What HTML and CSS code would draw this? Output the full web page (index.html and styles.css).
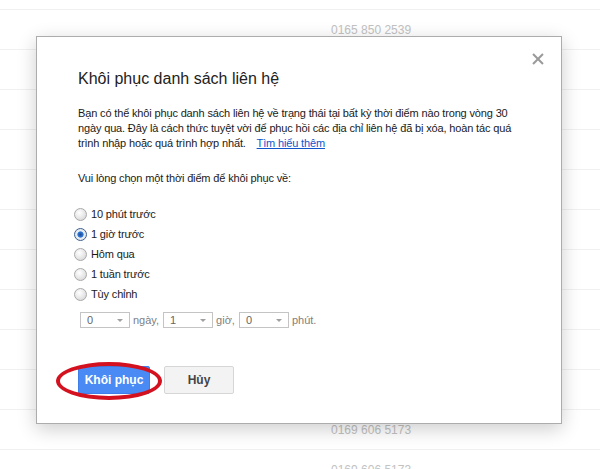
FILE: index.html
```html
<!DOCTYPE html>
<html lang="vi">
<head>
    <meta charset="UTF-8">
    <title>Khôi phục danh sách liên hệ</title>
    <link rel="stylesheet" href="styles.css">
</head>
<body>
    <div class="contacts">
        <div class="row"></div>
        <div class="row"><span class="phone">0165 850 2539</span></div>
        <div class="row"></div>
        <div class="row"></div>
        <div class="row"></div>
        <div class="row"></div>
        <div class="row"></div>
        <div class="row"></div>
        <div class="row"></div>
        <div class="row"></div>
        <div class="row"></div>
        <div class="row"><span class="phone">0169 606 5173</span></div>
        <div class="row"><span class="phone">0169 606 5173</span></div>
    </div>

    <div class="dialog">
        <span class="close" title="Đóng"></span>
        <h1 class="title">Khôi phục danh sách liên hệ</h1>
        <p class="intro">Bạn có thể khôi phục danh sách liên hệ về trạng thái tại bất kỳ thời điểm nào trong vòng 30<br>
            ngày qua. Đây là cách thức tuyệt vời để phục hồi các địa chỉ liên hệ đã bị xóa, hoàn tác quá<br>
            trình nhập hoặc quá trình hợp nhất. <a href="#" class="learn">Tìm hiểu thêm</a></p>
        <p class="prompt">Vui lòng chọn một thời điểm để khôi phục về:</p>

        <div class="options">
            <label class="option"><input type="radio" name="when"> 10 phút trước</label>
            <label class="option"><input type="radio" name="when" checked> 1 giờ trước</label>
            <label class="option"><input type="radio" name="when"> Hôm qua</label>
            <label class="option"><input type="radio" name="when"> 1 tuần trước</label>
            <label class="option"><input type="radio" name="when"> Tùy chỉnh</label>
        </div>

        <div class="custom">
            <span class="select">0</span><span class="unit">ngày,</span>
            <span class="select">1</span><span class="unit">giờ,</span>
            <span class="select">0</span><span class="unit">phút.</span>
        </div>

        <div class="actions">
            <button class="btn btn-primary">Khôi phục</button>
            <button class="btn">Hủy</button>
            <span class="mark"></span>
        </div>
    </div>
</body>
</html>
```

FILE: styles.css
```css
body {
    margin: 0;
    font-family: 'Liberation Sans', Arial, sans-serif;
    background-color: #fff;
    overflow: hidden;
}

/* contact list behind the dialog */
.contacts {
    margin-top: -30px;
}

.row {
    height: 40px;
    border-bottom: 1px solid #f1f1f1;
    box-sizing: border-box;
    display: flex;
    align-items: center;
    padding-left: 331px;
}

.phone {
    color: #c2c2c2;
    font-size: 12px;
}

/* dialog */
.dialog {
    position: absolute;
    left: 36px;
    top: 36px;
    width: 526px;
    height: 388px;
    box-sizing: border-box;
    background-color: #fff;
    border: 1px solid #acacac;
    box-shadow: 0 5px 18px rgba(0,0,0,0.2);
    padding: 32px 30px 0 41px;
    color: #1a1a1a;
}

.close {
    position: absolute;
    right: 17px;
    top: 16px;
    width: 12px;
    height: 12px;
}

.close::before,
.close::after {
    content: "";
    position: absolute;
    left: -1px;
    top: 5px;
    width: 14px;
    height: 2px;
    background-color: #9a9a9a;
    transform: rotate(45deg);
}

.close::after {
    transform: rotate(-45deg);
}

.title {
    margin: 0;
    font-size: 16px;
    line-height: 20px;
    font-weight: normal;
    color: #222;
}

.intro,
.prompt,
.option {
    font-size: 11px;
    letter-spacing: -0.15px;
}

.intro {
    margin: 17px 0 0 0;
    line-height: 15px;
    white-space: nowrap;
}

.learn {
    color: #1155cc;
    margin-left: 8px;
}

.prompt {
    margin: 20px 0 0 0;
    line-height: 15px;
}

.options {
    margin-top: 18px;
}

.option {
    display: flex;
    align-items: center;
    height: 20px;
}

.option input {
    appearance: none;
    -webkit-appearance: none;
    width: 13px;
    height: 13px;
    margin: 0 4px 0 -4px;
    border: 1px solid #a9a9a9;
    border-radius: 50%;
    box-sizing: border-box;
    background: radial-gradient(circle at 40% 35%, #ffffff 0%, #e6e6e6 55%, #cfcfcf 100%);
}

.option input:checked {
    border-color: #3d5f8f;
    background: radial-gradient(circle at 50% 50%, #1e4c8f 0%, #2f78d8 35%, #e8eef6 45%, #d8dde4 100%);
}

.custom {
    display: flex;
    align-items: center;
    margin-top: 8px;
    padding-left: 2px;
}

.select {
    position: relative;
    width: 50px;
    height: 16px;
    box-sizing: border-box;
    border: 1px solid #c4c4c4;
    font-size: 11px;
    line-height: 14px;
    color: #666;
    padding-left: 6px;
}

.select::after {
    content: "";
    position: absolute;
    right: 6px;
    top: 6px;
    border-left: 3px solid transparent;
    border-right: 3px solid transparent;
    border-top: 3px solid #a0a0a0;
}

.unit {
    font-size: 11px;
    color: #808080;
    margin: 0 4px 0 3px;
}

.actions {
    position: relative;
    display: flex;
    gap: 14px;
    margin-top: 38px;
}

.btn {
    width: 70px;
    height: 28px;
    padding: 0;
    font-family: 'Liberation Sans', Arial, sans-serif;
    font-size: 12px;
    font-weight: bold;
    color: #444;
    background-color: #f3f3f3;
    border: 1px solid #d6d6d6;
    border-radius: 2px;
}

.btn-primary {
    width: 72px;
    color: #fff;
    background-color: #4a8af4;
    border-color: #3f7ee8;
}

/* red hand-drawn highlight round the restore button */
.mark {
    position: absolute;
    left: -22px;
    top: -4px;
    width: 98px;
    height: 30px;
    border: 4px solid #d4121f;
    border-radius: 50%;
}
```
